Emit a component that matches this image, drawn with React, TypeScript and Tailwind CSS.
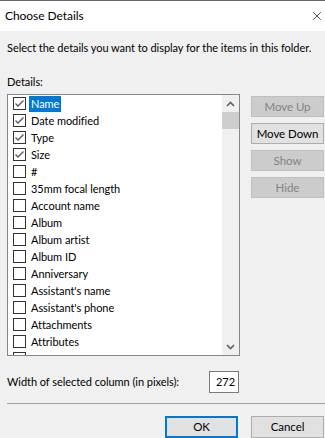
import { X } from 'lucide-react';

const items: { label: string; checked: boolean }[] = [
  { label: 'Name', checked: true },
  { label: 'Date modified', checked: true },
  { label: 'Type', checked: true },
  { label: 'Size', checked: true },
  { label: '#', checked: false },
  { label: '35mm focal length', checked: false },
  { label: 'Account name', checked: false },
  { label: 'Album', checked: false },
  { label: 'Album artist', checked: false },
  { label: 'Album ID', checked: false },
  { label: 'Anniversary', checked: false },
  { label: "Assistant's name", checked: false },
  { label: "Assistant's phone", checked: false },
  { label: 'Attachments', checked: false },
  { label: 'Attributes', checked: false },
];

function CheckBox({ checked }: { checked: boolean }) {
  return (
    <span className="w-[13px] h-[13px] shrink-0 border border-[#333333] bg-white flex items-center justify-center">
      {checked && (
        <svg width="11" height="11" viewBox="0 0 11 11">
          <polyline points="1.5,5.5 4,8 9.5,2.5" fill="none" stroke="#555555" strokeWidth="1.3" />
        </svg>
      )}
    </span>
  );
}

function SideButton({ label, enabled }: { label: string; enabled?: boolean }) {
  return (
    <button
      className={
        enabled
          ? 'h-[21px] w-[73px] border border-[#adadad] bg-[#e1e1e1] text-black text-[11.5px] leading-none whitespace-nowrap'
          : 'h-[21px] w-[73px] border border-[#bfbfbf] bg-[#cccccc] text-[#838383] text-[11.5px] leading-none whitespace-nowrap'
      }
    >
      {label}
    </button>
  );
}

export default function App() {
  return (
    <div
      className="w-[325px] h-[438px] overflow-hidden bg-[#f0f0f0] text-black text-[11px] leading-[16px] tracking-[-0.05px] flex flex-col whitespace-nowrap"
      style={{ fontFamily: 'Lato, "Noto Sans", sans-serif' }}
    >
      <div className="h-[31px] shrink-0 bg-white border-t border-[#6a6a6a] flex items-center justify-between pl-[5px] pr-[1px]">
        <span className="text-[12px]">Choose Details</span>
        <X className="w-[14px] h-[14px] text-black" strokeWidth={1.2} />
      </div>

      <div className="pl-[7px] flex flex-col">
        <p className="mt-[9px]">Select the details you want to display for the items in this folder.</p>
        <p className="mt-[18px]">Details:</p>

        <div className="mt-[4px] flex">
          <div className="w-[233px] h-[262px] shrink-0 border border-[#828790] bg-white flex overflow-hidden">
            <ul className="flex-1 flex flex-col">
              {items.map((item, i) => (
                <li key={item.label} className="h-[17px] shrink-0 flex items-center pl-[5px]">
                  <CheckBox checked={item.checked} />
                  <span
                    className={
                      i === 0
                        ? 'ml-[3px] px-[2px] h-[16px] leading-[16px] bg-[#0078d7] text-white'
                        : 'ml-[3px] px-[2px] h-[16px] leading-[16px]'
                    }
                  >
                    {item.label}
                  </span>
                </li>
              ))}
              {/* next row, only its box edge shows */}
              <li className="h-[17px] shrink-0 flex items-center pl-[5px]">
                <CheckBox checked={false} />
              </li>
            </ul>
            <div className="w-[17px] shrink-0 bg-[#f0f0f0] flex flex-col">
              <div className="h-[17px] flex items-center justify-center">
                <svg width="9" height="6" viewBox="0 0 9 6">
                  <polyline points="1,5 4.5,1.5 8,5" fill="none" stroke="#606060" strokeWidth="1.6" />
                </svg>
              </div>
              <div className="h-[17px] bg-[#cdcdcd]" />
              <div className="flex-1" />
              <div className="h-[17px] flex items-center justify-center">
                <svg width="9" height="6" viewBox="0 0 9 6">
                  <polyline points="1,1 4.5,4.5 8,1" fill="none" stroke="#606060" strokeWidth="1.6" />
                </svg>
              </div>
            </div>
          </div>

          <div className="ml-[11px] mt-[2px] flex flex-col gap-[6px]">
            <SideButton label="Move Up" />
            <SideButton label="Move Down" enabled />
            <SideButton label="Show" />
            <SideButton label="Hide" />
          </div>
        </div>

        <div className="mt-[15px] flex items-center">
          <span className="w-[202px]">Width of selected column (in pixels):</span>
          <span className="w-[30px] h-[22px] border border-[#7a7a7a] bg-white flex items-center justify-end pr-[3px]">272</span>
        </div>

        <div className="mt-[10px] h-px bg-[#a0a0a0]" />

        <div className="mt-[12px] flex justify-end gap-[13px] pr-[1px]">
          <button className="h-[22px] w-[73px] border-2 border-[#0078d7] bg-[#e1e1e1] text-[11.5px] leading-none">OK</button>
          <button className="h-[22px] w-[73px] border border-[#adadad] bg-[#e1e1e1] text-[11.5px] leading-none">Cancel</button>
        </div>
      </div>
    </div>
  );
}
